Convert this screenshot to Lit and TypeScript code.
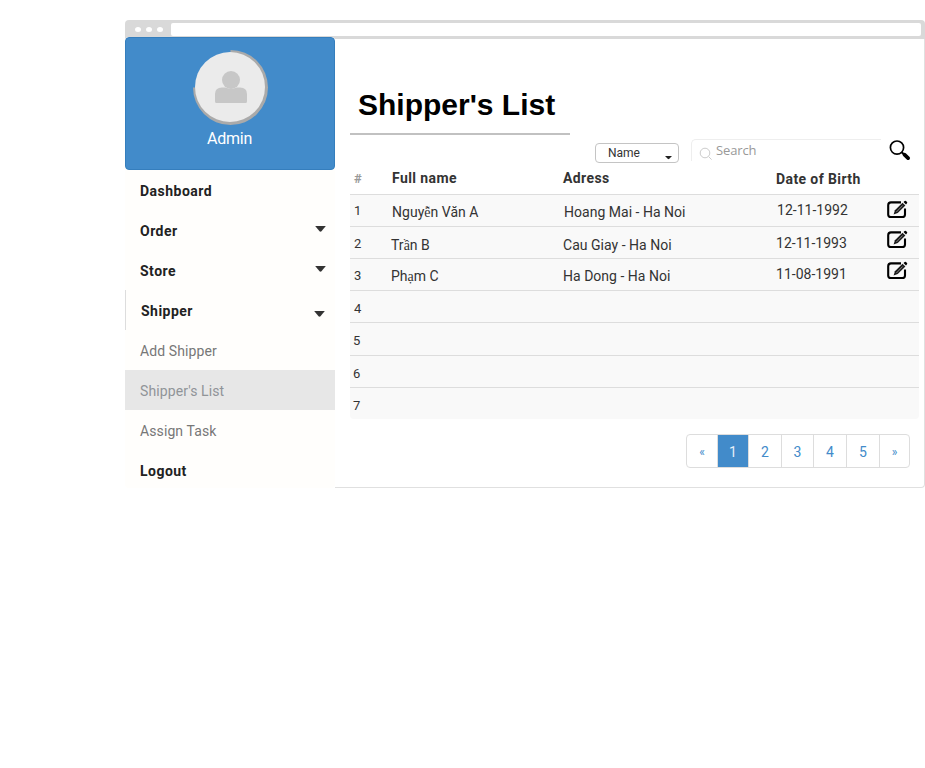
import { LitElement, html, css, svg, nothing } from "lit";
import { customElement } from "lit/decorators.js";
import { classMap } from "lit/directives/class-map.js";
import { styleMap } from "lit/directives/style-map.js";

interface MenuItem { label: string; kind: "top" | "sub"; arrow?: boolean; active?: boolean; open?: boolean; }
/** A table cell: text plus its left inset and the top inset inside the row. */
interface Cell { text: string; x: number; y: number; }
interface Row { height: number; cells: Cell[]; iconTop?: number; }

const MENU: MenuItem[] = [
  { label: "Dashboard", kind: "top" },
  { label: "Order", kind: "top", arrow: true },
  { label: "Store", kind: "top", arrow: true },
  { label: "Shipper", kind: "top", arrow: true, open: true },
  { label: "Add Shipper", kind: "sub" },
  { label: "Shipper's List", kind: "sub", active: true },
  { label: "Assign Task", kind: "sub" },
  { label: "Logout", kind: "top" },
];

const ROWS: Row[] = [
  { height: 32, iconTop: 5, cells: [{ text: "1", x: 4, y: 8 }, { text: "Nguyễn Văn A", x: 2, y: 9 }, { text: "Hoang Mai - Ha Noi", x: 1, y: 9 }, { text: "12-11-1992", x: 1, y: 7 }] },
  { height: 32, iconTop: 3, cells: [{ text: "2", x: 4, y: 9 }, { text: "Trần B", x: 1, y: 10 }, { text: "Cau Giay - Ha Noi", x: 0, y: 10 }, { text: "12-11-1993", x: 0, y: 8 }] },
  { height: 32, iconTop: 2, cells: [{ text: "3", x: 4, y: 9 }, { text: "Phạm C", x: 1, y: 9 }, { text: "Ha Dong - Ha Noi", x: 0, y: 9 }, { text: "11-08-1991", x: 0, y: 7 }] },
  { height: 32, cells: [{ text: "4", x: 4, y: 10 }] },
  { height: 33, cells: [{ text: "5", x: 3, y: 10 }] },
  { height: 32, cells: [{ text: "6", x: 3, y: 10 }] },
  { height: 32, cells: [{ text: "7", x: 3, y: 10 }] },
];

/** Vietnamese letters outside Latin Extended-A are set in the serif face. */
const withSerif = (text: string) =>
  text.split(/([\u1EA0-\u1EF9])/).map((part) => (/^[\u1EA0-\u1EF9]$/.test(part) ? html`<span class="viet">${part}</span>` : part));

const editIcon = svg`
  <path d="M14 2.4H4Q1.2 2.4 1.2 5.2v9.2q0 2.6 2.8 2.6h11.2q2.8 0 2.8-2.6V8.4" fill="none" stroke="#000" stroke-width="2.1"/>
  <path d="M6.6 14.4l1.3-4.2 7.6-7.5 2.9 2.7-7.7 7.6z" fill="#1c1c1c"/>
  <path d="M9.4 12l6.2-6.5" stroke="#999" stroke-width=".8"/>
  <path d="M16.5 2l1.2-1.1q.7-.5 1.3.1l1 1q.6.7 0 1.3l-1 1.2z" fill="#000"/>`;

@customElement("side-menu")
export class SideMenu extends LitElement {
  static styles = css`
    :host { display: block; width: 210px; background: #fffefc; border-radius: 4px; overflow: hidden; }
    .profile { box-sizing: border-box; height: 133px; padding-top: 11px; background: #428bca; border: 1px solid #357ebd; border-radius: 4px; display: flex; flex-direction: column; align-items: center; color: #fff; }
    .avatar { display: block; width: 76px; height: 78px; margin-left: 2px; }
    .who { font: 16px/20px Roboto, sans-serif; letter-spacing: -.25px; margin-top: 2px; padding-right: 1px; }
    .item { box-sizing: border-box; height: 40px; padding: 2px 9px 0 15px; display: flex; align-items: center; justify-content: space-between; font: 14px Roboto, sans-serif; }
    .top { font-weight: 700; color: #222; letter-spacing: .48px; }
    .sub { color: #777; letter-spacing: .1px; }
    .open { padding-left: 15px; padding-right: 10px; border-left: 1px solid #ddd; }
    .active { background: #e7e7e7; color: #909498; }
    .arrow { width: 11px; height: 6px; margin-bottom: 4px; }
    .open .arrow { margin: 6px 0 0; }
  `;
  render() {
    return html`
      <div class="profile">
        <svg class="avatar" viewBox="0 0 76 78">
          <path d="M37.5 1a37.5 37.5 0 1 1-37.5 37.5H37.5z" fill="#aaa"/>
          <circle cx="37" cy="38" r="35" fill="#ebebeb"/>
          <circle cx="38" cy="31" r="9" fill="#c7c7c7"/>
          <path d="M22 45q0-6.5 7-6.5h3.5q5.5 2.5 11 0H47q7 0 7 6.5v7.5q0 1.5-1.5 1.5h-29q-1.5 0-1.5-1.5z" fill="#c7c7c7"/>
        </svg>
        <span class="who">Admin</span>
      </div>
      ${MENU.map((m) => html`
        <div class=${classMap({ item: true, [m.kind]: true, active: !!m.active, open: !!m.open })}>
          <span>${m.label}</span>
          ${m.arrow ? html`<svg class="arrow" viewBox="0 0 11 6"><path d="M.2 0h10.6L6.5 5.2q-1 .9-2 0z" fill="#333"/></svg>` : nothing}
        </div>`)}`;
  }
}

@customElement("shipper-table")
export class ShipperTable extends LitElement {
  static styles = css`
    :host { display: block; width: 569px; font: 14px/16px Roboto, sans-serif; color: #333; }
    .head, .row { display: grid; grid-template-columns: 40px 173px 213px 111px 1fr; align-items: start; }
    .head { height: 31px; font-weight: 700; letter-spacing: .4px; }
    .head span { padding-top: 7px; }
    .head .hash { padding: 8px 0 0 4px; color: #999; font-size: 13px; }
    .head .name { padding-left: 2px; }
    .head .dob { padding-top: 8px; }
    .row { box-sizing: border-box; border-top: 1px solid #ddd; background: #f9f9f9; }
    .row:last-child { border-radius: 0 0 4px 4px; }
    .cell { letter-spacing: .02px; white-space: nowrap; }
    .cell:first-child { font-size: 13px; }
    .viet { font-family: "Liberation Serif", serif; line-height: 1; }
    .edit { width: 21px; height: 19px; display: block; }
  `;
  render() {
    return html`
      <div class="head">
        <span class="hash">#</span><span class="name">Full name</span><span>Adress</span><span class="dob">Date of Birth</span>
      </div>
      ${ROWS.map((r) => html`
        <div class="row" style=${styleMap({ height: `${r.height}px` })}>
          ${r.cells.map((c) => html`<span class="cell" style=${styleMap({ paddingLeft: `${c.x}px`, paddingTop: `${c.y}px` })}>${withSerif(c.text)}</span>`)}
          ${r.iconTop !== undefined ? html`<svg class="edit" viewBox="0 0 21 19" style=${styleMap({ marginTop: `${r.iconTop}px` })}>${editIcon}</svg>` : nothing}
        </div>`)}`;
  }
}

@customElement("page-nav")
export class PageNav extends LitElement {
  static styles = css`
    :host { display: block; }
    .pages { box-sizing: border-box; width: 224px; height: 34px; border: 1px solid #ddd; border-radius: 4px; display: grid; grid-template-columns: 31px 31px 33px 32px 33px 33px 29px; overflow: hidden; font: 14px Roboto, sans-serif; color: #428bca; background: #fff; }
    .page { display: flex; align-items: center; justify-content: center; padding-top: 2px; border-right: 1px solid #ddd; }
    .page:last-child { border-right: 0; }
    .small { font-size: 12px; }
    .current { background: #428bca; color: #e6eff8; }
  `;
  render() {
    return html`<div class="pages">${["«", "1", "2", "3", "4", "5", "»"].map((p) => html`
      <span class=${classMap({ page: true, small: p === "«" || p === "»", current: p === "1" })}>${p}</span>`)}</div>`;
  }
}

@customElement("app-root")
export class AppRoot extends LitElement {
  static styles = css`
    :host { display: block; box-sizing: border-box; height: 768px; padding: 20px 0 0 125px; background: #fff; overflow: hidden; }
    .window { width: 800px; height: 468px; box-sizing: border-box; display: flex; flex-direction: column; }
    .bar { box-sizing: border-box; height: 19px; flex: none; padding: 3px 4px 0 10px; background: #d9d9d9; border-radius: 4px 4px 0 0; display: flex; gap: 5px; align-items: flex-start; }
    .dot { width: 6px; height: 5px; margin-top: 4px; border-radius: 50%; background: #fff; }
    .url { flex: 1; height: 13px; margin-left: 3px; border-radius: 2px; background: #fff; }
    .body { display: flex; flex: 1; min-height: 0; }
    side-menu { margin-top: -2px; height: 451px; flex: none; }
    .main { box-sizing: border-box; flex: 1; height: 449px; padding-left: 15px; border: solid #e0e0e0; border-width: 0 1px 1px 0; border-radius: 0 0 4px 0; }
    .title { margin: 0; box-sizing: border-box; width: 220px; height: 96px; padding: 48px 0 0 8px; border-bottom: 2px solid #c1c1c1; font: bold 30px/36px "Liberation Sans", sans-serif; color: #000; white-space: nowrap; }
    .tools { height: 28px; display: flex; align-items: flex-start; padding: 0 14px 0 245px; }
    .select { box-sizing: border-box; width: 84px; height: 20px; margin-top: 8px; border: 1px solid #c4c4c4; border-radius: 4px; padding: 0 6px 0 12px; display: flex; align-items: center; justify-content: space-between; font: 12px Roboto, sans-serif; color: #333; }
    .caret { width: 7px; height: 4px; margin-top: 9px; }
    .search { display: flex; align-items: flex-start; width: 190px; height: 22px; margin: 4px 7px 0 12px; box-sizing: border-box; padding: 7px 0 0 7px; border: solid #eee; border-width: 1px 0 0 1px; border-radius: 5px 0 0 0; font: 13px/18px "Open Sans", sans-serif; letter-spacing: -.12px; color: #999; }
    .glass { width: 14px; height: 14px; }
    .hint { margin: -6px 0 0 3px; }
    .go { width: 22px; height: 21px; margin: 5px -1px 0 1px; }
    page-nav { margin: 15px 0 0 336px; }
  `;
  render() {
    return html`
      <div class="window">
        <div class="bar"><i class="dot"></i><i class="dot"></i><i class="dot"></i><div class="url"></div></div>
        <div class="body">
          <side-menu></side-menu>
          <div class="main">
            <h1 class="title">Shipper's List</h1>
            <div class="tools">
              <div class="select"><span>Name</span><svg class="caret" viewBox="0 0 7 4"><path d="M0 0h7L4.3 2.8q-.8.7-1.6 0z" fill="#222"/></svg></div>
              <div class="search">
                <svg class="glass" viewBox="0 0 14 14" fill="none" stroke="#ccc"><circle cx="6" cy="6" r="4.8"/><path d="M9.6 9.6l3 3"/></svg>
                <span class="hint">Search</span>
              </div>
              <svg class="go" viewBox="0 0 22 21" fill="none" stroke="#000"><circle cx="8" cy="7.6" r="6.6" stroke-width="1.7"/><path d="M12.7 12.2l3 2.7" stroke-width="2"/><path d="M15.5 14.7l3.6 3.4" stroke-width="3.8" stroke-linecap="round"/></svg>
            </div>
            <shipper-table></shipper-table>
            <page-nav></page-nav>
          </div>
        </div>
      </div>`;
  }
}
